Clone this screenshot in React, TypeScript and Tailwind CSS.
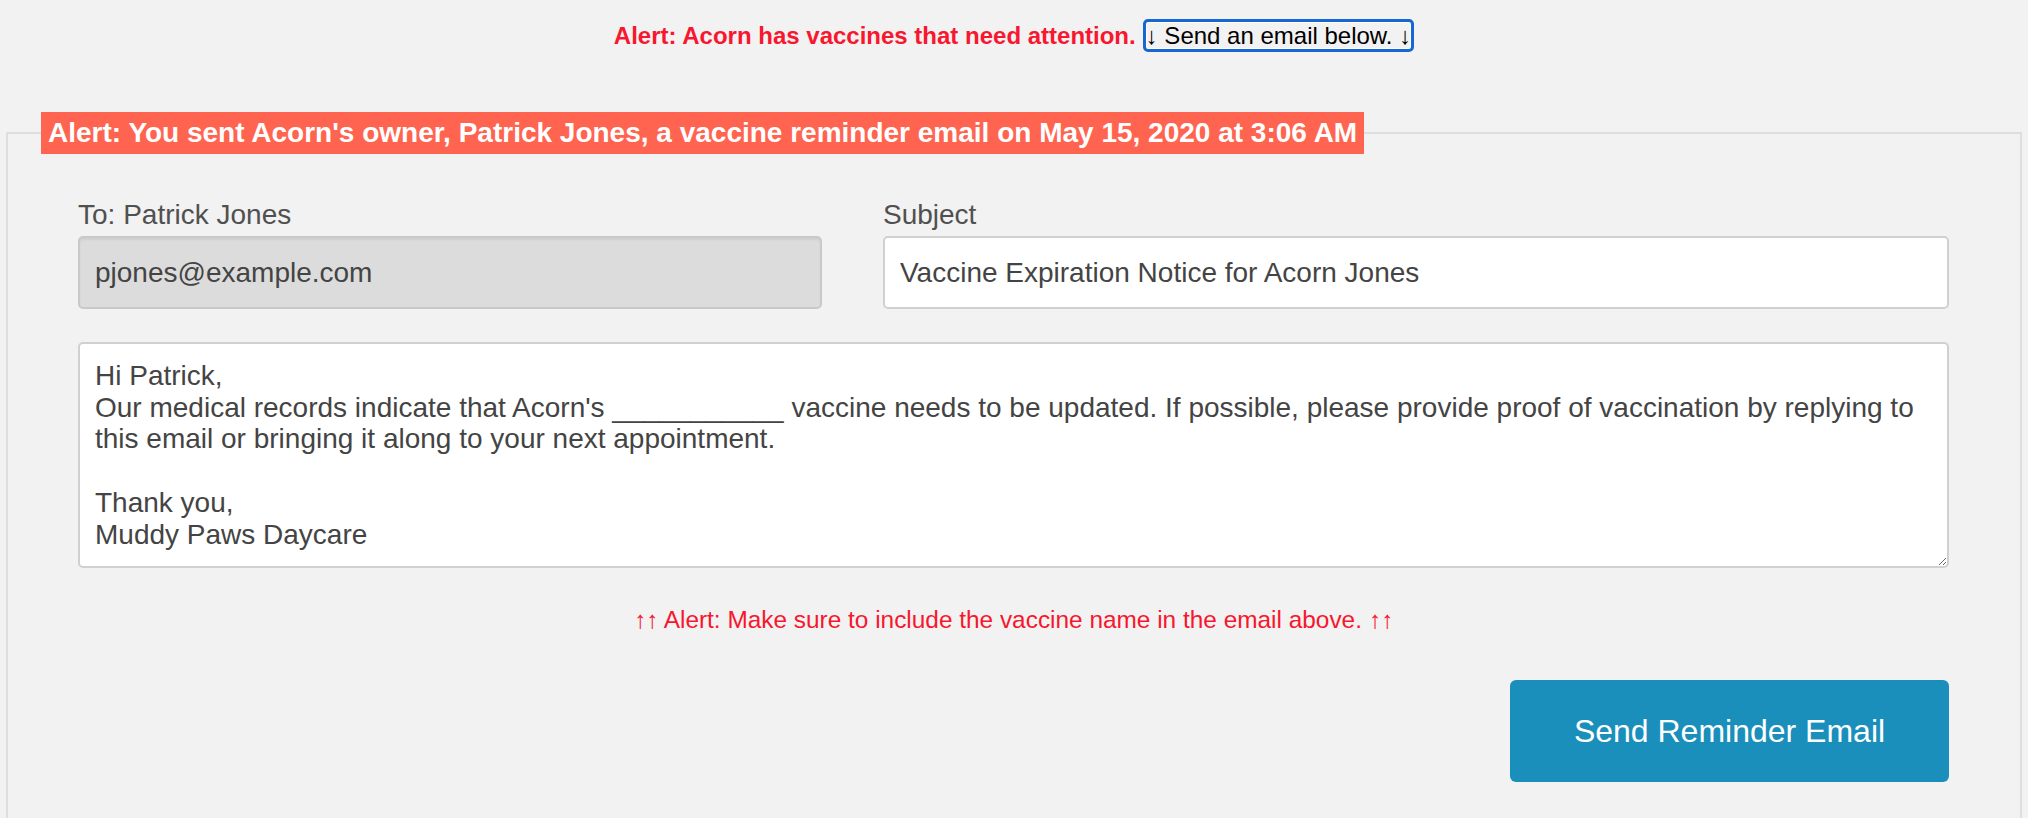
import React, { useState } from 'react';

const body = `Hi Patrick,
Our medical records indicate that Acorn's ___________ vaccine needs to be updated. If possible, please provide proof of vaccination by replying to this email or bringing it along to your next appointment.

Thank you,
Muddy Paws Daycare`;

const App: React.FC = () => {
  const [subject, setSubject] = useState('Vaccine Expiration Notice for Acorn Jones');
  const [message, setMessage] = useState(body);

  return (
    <div className="min-h-screen bg-[#f2f2f2] font-['Liberation_Sans',Arial,sans-serif] overflow-hidden">
      <div className="pt-[19px] flex justify-center items-center h-[52px] text-[24px] leading-[28px]">
        <span className="font-bold text-[#f7172e]">Alert: Acorn has vaccines that need attention.</span>
        <button className="ml-[7px] h-[33px] px-0 border-[3px] border-[#1767d0] rounded-[5px] shadow-[inset_0_0_0_1px_#fff] text-black bg-transparent leading-[26px]">
          ↓ Send an email below. ↓
        </button>
      </div>

      <fieldset className="mx-[6px] mt-[60px] border-2 border-[#dedede] pl-[33px] pb-[60px]">
        <legend className="bg-[#ff6450] text-white font-bold text-[28px] leading-[32px] px-[7px] py-[5px]">
          Alert: You sent Acorn's owner, Patrick Jones, a vaccine reminder email on May 15, 2020 at 3:06 AM
        </legend>

        <div className="pl-[37px] pr-[71px] pt-[45px]">
          <div className="flex gap-[61px]">
            <div className="w-[744px]">
              <label className="block text-[28px] leading-[32px] text-[#505050] mb-[5px]">To: Patrick Jones</label>
              <input
                type="email"
                readOnly
                value="pjones@example.com"
                className="w-full h-[73px] bg-[#dcdcdc] border-2 border-[#c9c9c9] rounded-[5px] px-[15px] text-[28px] text-[#444] shadow-[inset_0_2px_2px_rgba(0,0,0,0.06)] outline-none"
              />
            </div>
            <div className="flex-1">
              <label className="block text-[28px] leading-[32px] text-[#505050] mb-[5px]">Subject</label>
              <input
                type="text"
                value={subject}
                onChange={(e) => setSubject(e.target.value)}
                className="w-full h-[73px] bg-white border-2 border-[#d0d0d0] rounded-[5px] px-[15px] text-[28px] text-[#444] outline-none"
              />
            </div>
          </div>

          <textarea
            value={message}
            onChange={(e) => setMessage(e.target.value)}
            className="block w-full mt-[33px] h-[226px] bg-white border-2 border-[#d0d0d0] rounded-[5px] px-[15px] py-4 text-[28px] leading-[31.7px] text-[#444] outline-none"
          />

          <p className="mt-[38px] text-center text-[24.4px] leading-[28px] text-[#f7172e]">
            ↑↑ Alert: Make sure to include the vaccine name in the email above. ↑↑
          </p>

          <div className="flex justify-end mt-[46px]">
            <button className="w-[439px] h-[102px] bg-[#1a8fbb] rounded-[6px] text-white text-[32px]">
              Send Reminder Email
            </button>
          </div>
        </div>
      </fieldset>
    </div>
  );
};

export default App;
